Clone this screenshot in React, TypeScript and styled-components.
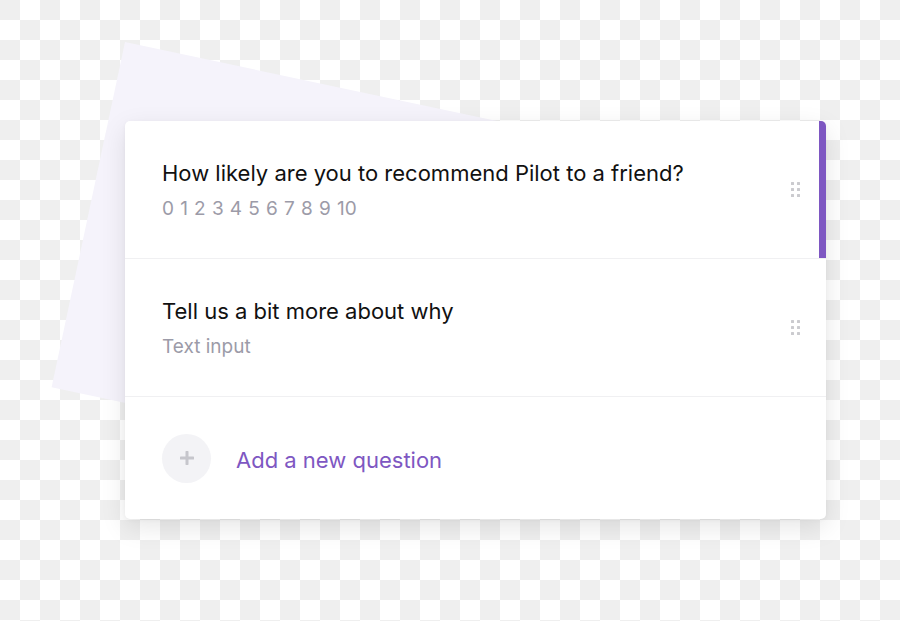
import React from 'react';
import styled, { createGlobalStyle } from 'styled-components';

const GlobalStyle = createGlobalStyle`
    html, body {
        margin: 0;
        padding: 0;
    }
    body {
        font-family: Inter, "Noto Sans", sans-serif;
        background-color: #ffffff;
        background-image:
            linear-gradient(45deg, #efefef 25%, transparent 25%, transparent 75%, #efefef 75%),
            linear-gradient(45deg, #efefef 25%, transparent 25%, transparent 75%, #efefef 75%);
        background-size: 40px 40px;
        background-position: 20px 0, 0 20px;
    }
`

const Stage = styled.div`
    position: relative;
    width: 900px;
    height: 621px;
    box-sizing: border-box;
    padding: 121px 0 0 125px;
    overflow: hidden;
`
const BackSheet = styled.div`
    position: absolute;
    left: 125px;
    top: 42px;
    width: 500px;
    height: 353px;
    background: #f5f3fb;
    transform: rotate(12deg);
    transform-origin: 0 0;
`
const Card = styled.div`
    position: relative;
    width: 701px;
    background: #ffffff;
    border-radius: 5px;
    overflow: hidden;
    box-shadow: 0 8px 26px rgba(0, 0, 0, 0.1), 0 1px 4px rgba(0, 0, 0, 0.04);
`
const QuestionRow = styled.div<{ $active?: boolean }>`
    height: 137px;
    display: flex;
    align-items: center;
    justify-content: space-between;
    padding: 0 26px 0 37px;
    border-bottom: 1px solid #f0f0f2;
    box-shadow: ${p => (p.$active ? 'inset -7px 0 0 #7e57c2' : 'none')};
`
const QuestionText = styled.div`
    display: flex;
    flex-direction: column;
    gap: 12px;
`
const Title = styled.span`
    font-size: 22px;
    color: #111111;
    line-height: 26px;
`
const Hint = styled.span`
    font-size: 19px;
    color: #9c9ba8;
    line-height: 22px;
`
const Scale = styled.span`
    display: flex;
    gap: 6.2px;
    font-size: 19px;
    color: #9c9ba8;
    line-height: 22px;
`
const Handle = styled.div`
    display: grid;
    grid-template-columns: repeat(2, 3px);
    grid-template-rows: repeat(3, 3px);
    gap: 3px;
    span {
        background: #cbcbcf;
        border-radius: 0.5px;
    }
`
const AddRow = styled.div`
    height: 122px;
    display: flex;
    align-items: center;
    gap: 25px;
    padding: 0 37px;
`
const PlusCircle = styled.div`
    width: 49px;
    height: 49px;
    border-radius: 50%;
    background: #f3f3f6;
    display: flex;
    align-items: center;
    justify-content: center;
`
const AddLabel = styled.span`
    font-size: 22px;
    color: #7e57c2;
    padding-top: 3px;
`

const DragHandle = () => (
    <Handle>
        {[0, 1, 2, 3, 4, 5].map(i => <span key={i} />)}
    </Handle>
)

const App = () => {
    return (
        <>
            <GlobalStyle />
            <Stage>
                <BackSheet />
                <Card>
                    <QuestionRow $active>
                        <QuestionText>
                            <Title>How likely are you to recommend Pilot to a friend?</Title>
                            <Scale>
                                {Array.from({ length: 11 }, (_, i) => <span key={i}>{i}</span>)}
                            </Scale>
                        </QuestionText>
                        <DragHandle />
                    </QuestionRow>
                    <QuestionRow>
                        <QuestionText>
                            <Title>Tell us a bit more about why</Title>
                            <Hint>Text input</Hint>
                        </QuestionText>
                        <DragHandle />
                    </QuestionRow>
                    <AddRow>
                        <PlusCircle>
                            <svg width="14" height="14" viewBox="0 0 14 14">
                                <path d="M7 1v12M1 7h12" stroke="#c6c6cc" strokeWidth="3" strokeLinecap="round" />
                            </svg>
                        </PlusCircle>
                        <AddLabel>Add a new question</AddLabel>
                    </AddRow>
                </Card>
            </Stage>
        </>
    )
};

export default App;
